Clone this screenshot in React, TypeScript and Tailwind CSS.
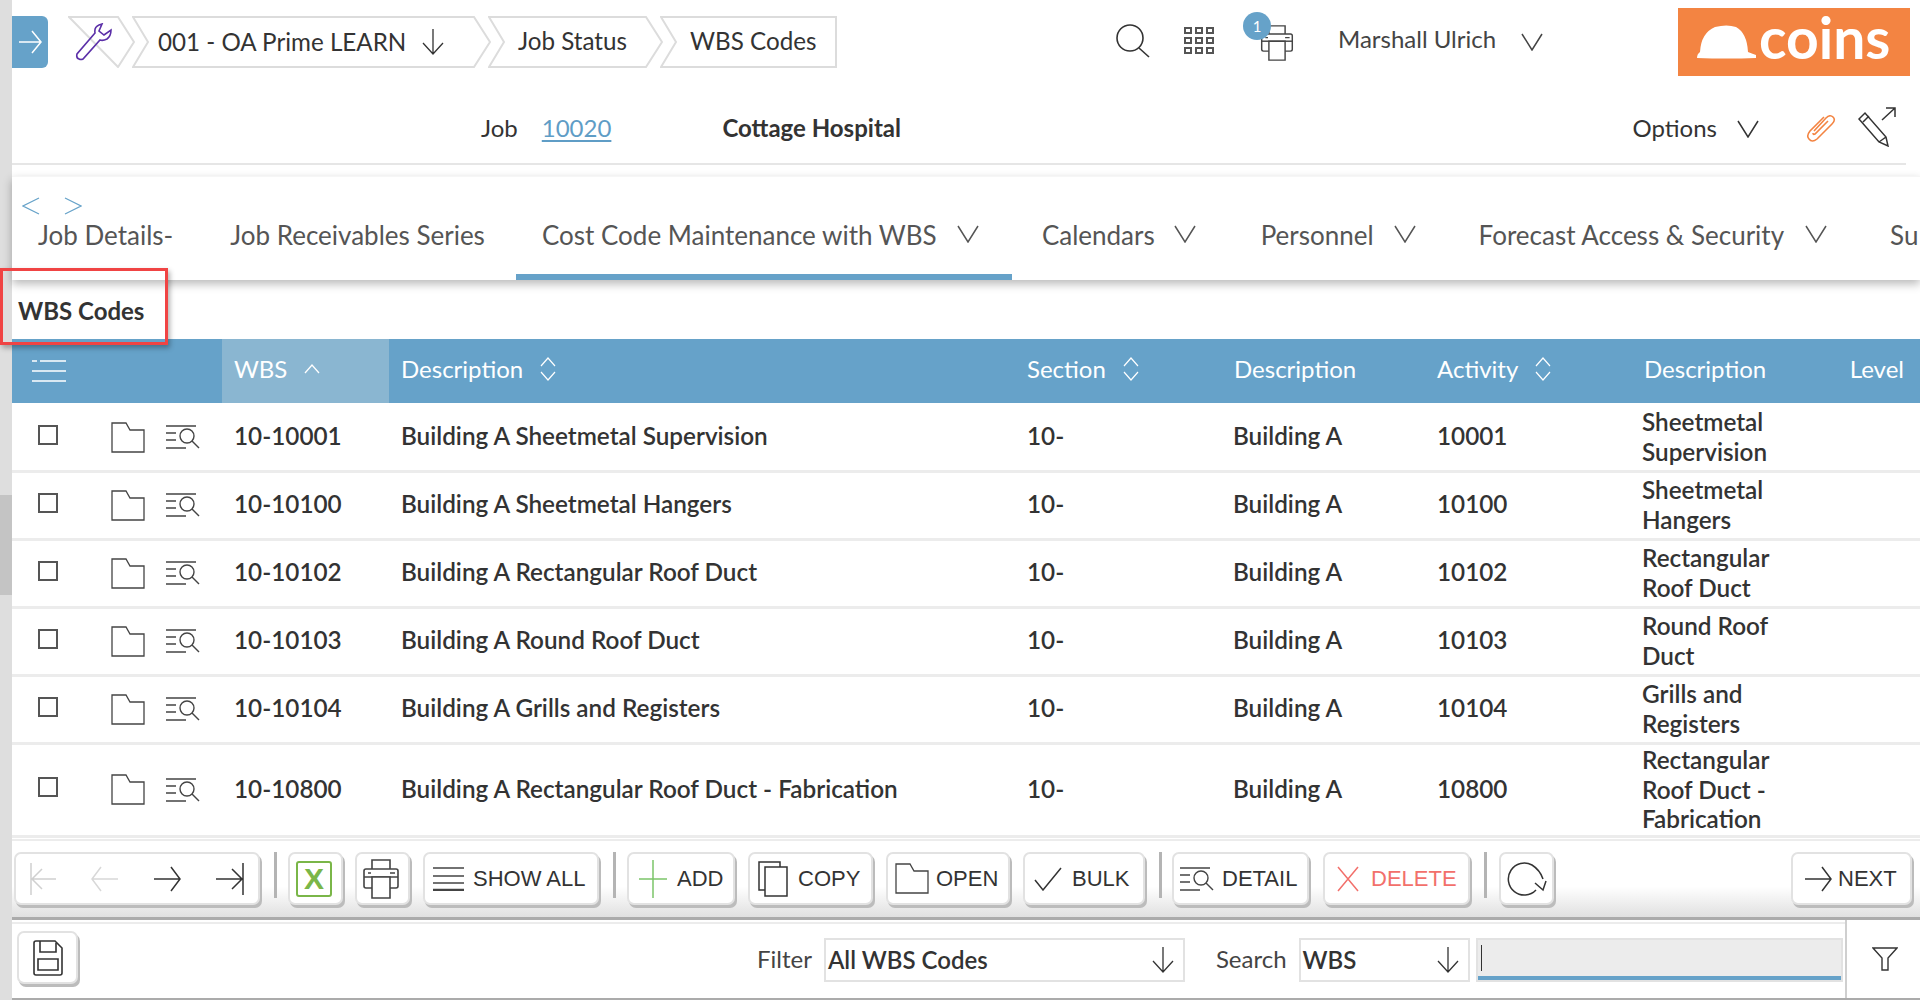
import React from "react";

type P = { className?: string };
const S = ({ w, h, children, className, color = "#333", sw = 1.5 }: { w: number; h: number; children: React.ReactNode; className?: string; color?: string; sw?: number }) => (
  <svg width={w} height={h} viewBox={`0 0 ${w} ${h}`} fill="none" stroke={color} strokeWidth={sw} className={`shrink-0 ${className ?? ""}`}>
    {children}
  </svg>
);

const ChevD = ({ c = "#333", className }: { c?: string; className?: string }) => (
  <S w={22} h={18} color={c} className={className}><path d="M1 1 L11 17 L21 1" /></S>
);
const ArrowDown = ({ className }: P) => (
  <S w={24} h={26} sw={1.3} className={className}><path d="M12 0 V25 M2 14 L12 25 L22 14" /></S>
);
const ArrowRight = ({ c = "#333", className, w = 28, h = 26 }: { c?: string; className?: string; w?: number; h?: number }) => (
  <S w={w} h={h} color={c} className={className}><path d={`M1 ${h / 2} H${w - 1} M${w - 10} 1 L${w - 1} ${h / 2} L${w - 10} ${h - 1}`} /></S>
);
const Sort = () => (
  <S w={18} h={24} color="#fff" sw={1.2}><path d="M2 9 L9 1 L16 9 M2 15 L9 23 L16 15" /></S>
);
const Folder = () => (
  <S w={34} h={31} sw={1.3} color="#444"><path d="M1 30 V1 H15 L19 8 H33 V30 Z" /></S>
);
const Detail = ({ w = 34, h = 24 }: { w?: number; h?: number }) => (
  <S w={w} h={h} sw={1.4} color="#444">
    <path d="M0 1 H30 M0 8 H10 M0 15 H10 M0 23 H20" />
    <circle cx="21" cy="11" r="7" />
    <path d="M26 16 L33 23" />
  </S>
);

const Crumb = ({ w, first, last, children, className }: { w: number; first?: boolean; last?: boolean; children?: React.ReactNode; className?: string }) => {
  const l = first ? `1,1 ` : `1,1 16,26 1,51 `;
  const r = last ? `${w - 1},51 ${w - 1},1` : `${w - 17},51 ${w - 1},26 ${w - 17},1`;
  return (
    <div className={`relative h-[52px] flex items-center shrink-0 ${className ?? ""}`} style={{ width: w }}>
      <svg width={w} height={52} className="absolute left-0 top-0" fill="none" stroke="#dcdcdc" strokeWidth={2}>
        <polygon points={l + r} />
      </svg>
      <div className="relative flex items-center w-full">{children}</div>
    </div>
  );
};

const Btn = ({ w, children, className }: { w: string; children: React.ReactNode; className?: string }) => (
  <div className={`${w} h-[53px] shrink-0 flex items-center bg-white border-2 border-[#e2e2e2] rounded-[7px] shadow-[2px_3px_0_#bcbcbc] font-['Liberation_Sans',sans-serif] text-[22px] text-[#333] ${className ?? ""}`}>
    {children}
  </div>
);
const Sep = ({ className }: P) => <div className={`w-[3px] h-[46px] bg-[#b4b4b4] shrink-0 ${className ?? ""}`} />;

const PrinterIcon = ({ w = 36, h = 40 }: { w?: number; h?: number }) => (
  <svg width={w} height={h} viewBox="0 0 36 40" fill="none" stroke="#444" strokeWidth="1.6" className="shrink-0">
    <path d="M9 10 V1 H27 V10" />
    <path d="M9 29 H3 Q1 29 1 27 V12 Q1 10 3 10 H33 Q35 10 35 12 V27 Q35 29 33 29 H27" />
    <path d="M1 18 H35" />
    <path d="M9 18 H27 V39 H9 Z" fill="#fff" />
    <path d="M5 14 H8 M27 14 H32" />
  </svg>
);

const rows = [
  { wbs: "10-10001", d: "Building A Sheetmetal Supervision", a: "10001", l: ["Sheetmetal", "Supervision"] },
  { wbs: "10-10100", d: "Building A Sheetmetal Hangers", a: "10100", l: ["Sheetmetal", "Hangers"] },
  { wbs: "10-10102", d: "Building A Rectangular Roof Duct", a: "10102", l: ["Rectangular", "Roof Duct"] },
  { wbs: "10-10103", d: "Building A Round Roof Duct", a: "10103", l: ["Round Roof", "Duct"] },
  { wbs: "10-10104", d: "Building A Grills and Registers", a: "10104", l: ["Grills and", "Registers"] },
  { wbs: "10-10800", d: "Building A Rectangular Roof Duct - Fabrication", a: "10800", l: ["Rectangular", "Roof Duct -", "Fabrication"] },
];

const cols = "grid grid-cols-[210px_180px_621px_211px_203px_207px_1fr]";

export default function App() {
  return (
    <div className="relative w-[1920px] h-[1000px] overflow-hidden bg-white flex font-['Lato',sans-serif] text-[#333]">
      {/* scroll rail */}
      <div className="w-[12px] h-full bg-[#dedede] shrink-0 pt-[495px]">
        <div className="h-[100px] bg-[#c4c4c4]" />
      </div>

      <div className="flex-1 min-w-0 flex flex-col">
        {/* top bar */}
        <div className="h-[82px] flex items-start shrink-0 pr-[10px] pt-[16px]">
          <div className="w-[36px] h-[52px] bg-[#66a2c9] rounded-r-[6px] flex items-center justify-center shrink-0">
            <ArrowRight c="#fff" w={24} h={24} />
          </div>
          <div className="flex ml-[20px]">
            <Crumb w={67} first>
              <svg width="38" height="38" viewBox="0 0 38 38" fill="none" stroke="#5b2fa8" strokeWidth="1.6" className="ml-[7px]">
                <path d="M4 36 Q1 35 2 31 L20 10 Q19 4 24 2 L27 1 L24 8 L29 12 L36 7 Q36 13 32 16 Q28 18 25 17 L8 36 Q6 37 4 36 Z" />
              </svg>
            </Crumb>
            <Crumb w={359} className="-ml-[3px]">
              <span className="ml-[26px] text-[24.2px] whitespace-nowrap">001 - OA Prime LEARN</span>
              <ArrowDown className="ml-[15px]" />
            </Crumb>
            <Crumb w={175} className="-ml-[3px]">
              <span className="ml-[30px] text-[24.2px] whitespace-nowrap -mt-[2px]">Job Status</span>
            </Crumb>
            <Crumb w={177} last className="-ml-[3px]">
              <span className="ml-[30px] text-[24.2px] whitespace-nowrap -mt-[2px]">WBS Codes</span>
            </Crumb>
          </div>

          <svg width="34" height="34" viewBox="0 0 34 34" fill="none" stroke="#333" strokeWidth="1.6" className="ml-[279px] mt-[8px] shrink-0">
            <circle cx="14" cy="14" r="13" />
            <path d="M23 24 L33 33" />
          </svg>
          <div className="ml-[34px] mt-[11px] grid grid-cols-3 gap-x-[3px] gap-y-[3px] shrink-0">
            {Array.from({ length: 9 }).map((_, i) => (
              <div key={i} className="w-[8px] h-[7px] border-2 border-[#555]" />
            ))}
          </div>
          <div className="relative ml-[46px] mt-[9px] shrink-0">
            <PrinterIcon w={34} h={36} />
            <div className="absolute -left-[17px] -top-[13px] w-[28px] h-[28px] rounded-full bg-[#66a2c9] text-white text-[15px] flex items-center justify-center">1</div>
          </div>
          <span className="ml-[44px] mt-[5px] text-[24px] text-[#444] whitespace-nowrap">Marshall Ulrich</span>
          <ChevD className="ml-[25px] mt-[17px]" c="#444" />
          <div className="ml-auto -mt-[8px] w-[232px] h-[68px] bg-[#f38442] flex items-center pl-[19px] shrink-0">
            <svg width="60" height="34" viewBox="0 0 60 34" fill="#fff"><path d="M0 33 Q0 29 3 27 Q4 8 18 2 Q30 -1 39 2 Q50 8 51 27 Q56 29 59 30 L59 33 Q30 34 0 33 Z" /></svg>
            <span className="ml-[2px] text-[57px] leading-none font-bold text-white -mt-[10px]">coins</span>
          </div>
        </div>

        {/* job line */}
        <div className="h-[83px] shrink-0 flex items-center border-b-2 border-[#e6e6e6] mr-[14px] pt-[10px]">
          <span className="ml-[469px] text-[24px]">Job</span>
          <span className="ml-[24px] text-[24px] text-[#5f9dc6] underline underline-offset-[3px]">10020</span>
          <span className="ml-[111px] text-[24px] font-bold">Cottage Hospital</span>
          <span className="ml-auto text-[24px]">Options</span>
          <ChevD className="ml-[20px] mt-[3px]" />
          <svg width="30" height="28" viewBox="0 0 30 28" fill="none" stroke="#f38442" strokeWidth="1.6" className="ml-[47px] shrink-0">
            <path d="M8 17 L20 4 Q24 0 27 3 Q30 6 26 10 L11 25 Q6 29 3 25 Q0 22 4 17 L18 3 M22 7 L9 20 Q7 21 7 19" />
          </svg>
          <svg width="38" height="40" viewBox="0 0 38 40" fill="none" stroke="#333" strokeWidth="1.5" className="ml-[22px] -mt-[2px] mr-[10px] shrink-0">
            <path d="M1 12 L7 6 L28 30 L30 39 L21 35 Z M5 15 L11 9 M21 35 L28 30" />
            <path d="M24 13 L37 1 M28 1 H37 V10" />
          </svg>
        </div>

        {/* tabs */}
        <div className="mt-[11px] h-[104px] shrink-0 relative bg-white border-t border-[#f6f6f6] shadow-[0_4px_9px_rgba(0,0,0,0.28)] flex flex-col">
          <div className="flex gap-[24px] pl-[10px] pt-[20px] h-[41px]">
            <svg width="18" height="18" viewBox="0 0 18 18" fill="none" stroke="#66a2c9" strokeWidth="1.2"><path d="M17 1 L1 9 L17 17" /></svg>
            <svg width="18" height="18" viewBox="0 0 18 18" fill="none" stroke="#66a2c9" strokeWidth="1.2"><path d="M1 1 L17 9 L1 17" /></svg>
          </div>
          <div className="flex flex-1 overflow-hidden text-[26px] leading-[34px] text-[#555] whitespace-nowrap">
            <div className="pl-[26px]">Job Details-</div>
            <div className="pl-[57px] pr-[57px]">Job Receivables Series</div>
            <div className="relative w-[496px] shrink-0 -ml-[26px] pl-[26px] flex items-start border-b-[6px] border-[#66a2c9]">
              Cost Code Maintenance with WBS<ChevD className="ml-[20px] mt-[7px]" c="#555" />
            </div>
            <div className="pl-[30px] flex items-start">Calendars<ChevD className="ml-[19px] mt-[7px]" c="#555" /></div>
            <div className="pl-[65px] flex items-start">Personnel<ChevD className="ml-[20px] mt-[7px]" c="#555" /></div>
            <div className="pl-[63px] flex items-start">Forecast Access &amp; Security<ChevD className="ml-[21px] mt-[7px]" c="#555" /></div>
            <div className="pl-[63px]">Su</div>
          </div>
        </div>

        {/* title */}
        <div className="h-[59px] shrink-0 flex items-center pl-[6px] text-[24px] font-bold pt-[3px]">WBS Codes</div>

        {/* table */}
        <div className={`${cols} h-[64px] shrink-0 bg-[#66a2c9] text-white text-[24px] items-center`}>
          <div className="pl-[20px]">
            <svg width="36" height="22" viewBox="0 0 36 22" fill="none" stroke="#fff" strokeWidth="1.6"><path d="M0 1 H5 M8 1 H34 M0 11 H34 M0 21 H34" /></svg>
          </div>
          <div className="h-full bg-[#8ab6d1] flex items-center gap-[16px] pl-[12px] w-[167px] pb-[4px]">
            WBS
            <svg width="18" height="12" viewBox="0 0 18 12" fill="none" stroke="#fff" strokeWidth="1.3"><path d="M2 10 L9 2 L16 10" /></svg>
          </div>
          <div className="-ml-[1px] flex items-center gap-[16px] pb-[4px]">Description<Sort /></div>
          <div className="pl-[4px] flex items-center gap-[16px] pb-[4px]">Section<Sort /></div>
          <div className="pb-[4px]">Description</div>
          <div className="flex items-center gap-[16px] pb-[4px]">Activity<Sort /></div>
          <div className="flex items-center justify-between pr-[16px] pb-[4px]"><span>Description</span><span>Level</span></div>
        </div>
        <div className="flex-1 min-h-0 pt-[2px] flex flex-col">
          {rows.map((r, i) => (
            <div key={r.wbs} className={`${cols} ${i === 5 ? "h-[93px]" : "h-[68px]"} shrink-0 border-b-[3px] border-[#ececec] items-center text-[24.3px] font-semibold box-border pb-[2px]`}>
              <div className="flex items-center pl-[26px]">
                <div className="w-[20px] h-[20px] border-2 border-[#555] -mt-[4px] shrink-0" />
                <div className="ml-[53px] mt-[1px]"><Folder /></div>
                <div className="ml-[21px] mt-[1px]"><Detail /></div>
              </div>
              <div className="pl-[12px]">{r.wbs}</div>
              <div className="-ml-[1px]">{r.d}</div>
              <div className="pl-[4px]">10-</div>
              <div className="-ml-[1px]">Building A</div>
              <div>{r.a}</div>
              <div className="-ml-[2px] leading-[29.5px]">
                {r.l.map((t) => <div key={t}>{t}</div>)}
              </div>
            </div>
          ))}
        </div>

        {/* toolbar */}
        <div className="h-[81px] shrink-0 border-t-2 border-b-[3px] border-t-[#ececec] border-b-[#ababab] bg-gradient-to-b from-white from-[60%] to-[#e0e0e0] flex items-start pt-[11px] pl-[2px] pr-[8px]">
          <Btn w="w-[246px]" className="justify-between px-[14px]">
            <S w={26} h={34} color="#d0d0d0"><path d="M1 1 V33 M26 17 H2 M12 7 L2 17 L12 27" /></S>
            <ArrowRight c="#d8d8d8" className="rotate-180" />
            <ArrowRight />
            <S w={28} h={34}><path d="M27 1 V33 M0 17 H26 M16 7 L26 17 L16 27" /></S>
          </Btn>
          <Sep className="ml-[14px]" />
          <Btn w="w-[55px]" className="ml-[11px] justify-center pr-[3px]">
            <div className="w-[36px] h-[36px] border-2 border-[#7ab648] rounded-[3px] flex items-center justify-center text-[#7ab648] font-bold text-[30px] leading-none">X</div>
          </Btn>
          <Btn w="w-[55px]" className="ml-[12px] justify-center pr-[3px]"><PrinterIcon /></Btn>
          <Btn w="w-[176px]" className="ml-[13px] pl-[8px]">
            <S w={31} h={24} color="#444">
              <path d="M0 1 H31 M0 9 H31 M0 16 H31" strokeWidth="1.5" />
              <path d="M0 23 H31" strokeWidth="2.5" />
            </S>
            <span className="ml-[9px]">SHOW ALL</span>
          </Btn>
          <Sep className="ml-[14px]" />
          <Btn w="w-[108px]" className="ml-[11px] pl-[10px] text-[#6cbb56]">
            <S w={28} h={38} color="#7cc56a"><path d="M14 0 V38 M0 19 H28" /></S>
            <span className="ml-[10px]">ADD</span>
          </Btn>
          <Btn w="w-[125px]" className="ml-[13px] pl-[8px]">
            <S w={30} h={36}><path d="M7 35 V6 H29 V35 Z M7 29 H1 V1 H22 V6" /></S>
            <span className="ml-[10px]">COPY</span>
          </Btn>
          <Btn w="w-[124px]" className="ml-[13px] pl-[7px]"><Folder /><span className="ml-[7px]">OPEN</span></Btn>
          <Btn w="w-[122px]" className="ml-[13px] pl-[9px]">
            <S w={28} h={24}><path d="M1 13 L9 23 L27 1" /></S>
            <span className="ml-[10px]">BULK</span>
          </Btn>
          <Sep className="ml-[14px]" />
          <Btn w="w-[137px]" className="ml-[10px] pl-[6px]"><Detail /><span className="ml-[8px]">DETAIL</span></Btn>
          <Btn w="w-[147px]" className="ml-[14px] pl-[12px] text-[#f2706b]">
            <S w={22} h={26} color="#f2706b"><path d="M1 1 L21 25 M21 1 L1 25" /></S>
            <span className="ml-[12px]">DELETE</span>
          </Btn>
          <Sep className="ml-[14px]" />
          <Btn w="w-[55px]" className="ml-[12px] justify-center">
            <S w={40} h={36}>
              <path d="M29 29 A16 16 0 1 1 25 4 Q33 9 36 18" />
              <path d="M28 22 L36 29 L39 20" />
            </S>
          </Btn>
          <Btn w="w-[121px]" className="ml-auto pl-[11px]"><ArrowRight /><span className="ml-[6px]">NEXT</span></Btn>
        </div>

        {/* filter */}
        <div className="h-[80px] shrink-0 border-b-2 border-[#ababab] flex items-stretch">
          <div className="flex-1 flex items-start border-t-2 mt-[2px] border-[#ececec] pl-[5px] pt-[7px]">
            <Btn w="w-[61px]" className="justify-center">
              <svg width="30" height="36" viewBox="0 0 30 36" fill="none" stroke="#333" strokeWidth="1.6">
                <path d="M1 3 Q1 1 3 1 H22 L29 8 V33 Q29 35 27 35 H3 Q1 35 1 33 Z" />
                <path d="M7 1 V12 H23 V3 M5 19 H25 V30 H5 Z" />
              </svg>
            </Btn>
            <span className="ml-[679px] mt-[10px] text-[24px] text-[#444]">Filter</span>
            <div className="ml-[12px] mt-[7px] w-[361px] h-[44px] border-2 border-[#e2e2e2] flex items-center pl-[2px] pr-[8px] justify-between text-[24px] font-semibold">
              All WBS Codes<ArrowDown />
            </div>
            <span className="ml-[31px] mt-[10px] text-[24px] text-[#444]">Search</span>
            <div className="ml-[12px] mt-[7px] w-[171px] h-[44px] border-2 border-[#e2e2e2] flex items-center pl-[2px] pr-[8px] justify-between text-[24px] font-semibold">
              WBS<ArrowDown />
            </div>
            <div className="ml-[6px] mt-[7px] w-[367px] h-[44px] bg-[#ececec] border-2 border-[#e2e2e2] flex flex-col">
              <div className="flex-1 pl-[3px] pt-[5px]"><div className="w-[1px] h-[26px] bg-[#333]" /></div>
              <div className="h-[4px] bg-[#66a2c9]" />
            </div>
          </div>
          <div className="w-[75px] shrink-0 border-l-2 border-[#cfcfcf] flex items-center justify-center pb-[1px] pl-[2px]">
            <svg width="26" height="24" viewBox="0 0 26 24" fill="none" stroke="#333" strokeWidth="1.4"><path d="M1 1 H25 L16 11 V23 H10 V11 Z" /></svg>
          </div>
        </div>
      </div>

      {/* annotation */}
      <div className="absolute left-0 top-[268px] w-[168px] h-[77px] border-[3px] border-[#f04444] shadow-[2px_3px_5px_rgba(0,0,0,0.3)] pointer-events-none" />
    </div>
  );
}
